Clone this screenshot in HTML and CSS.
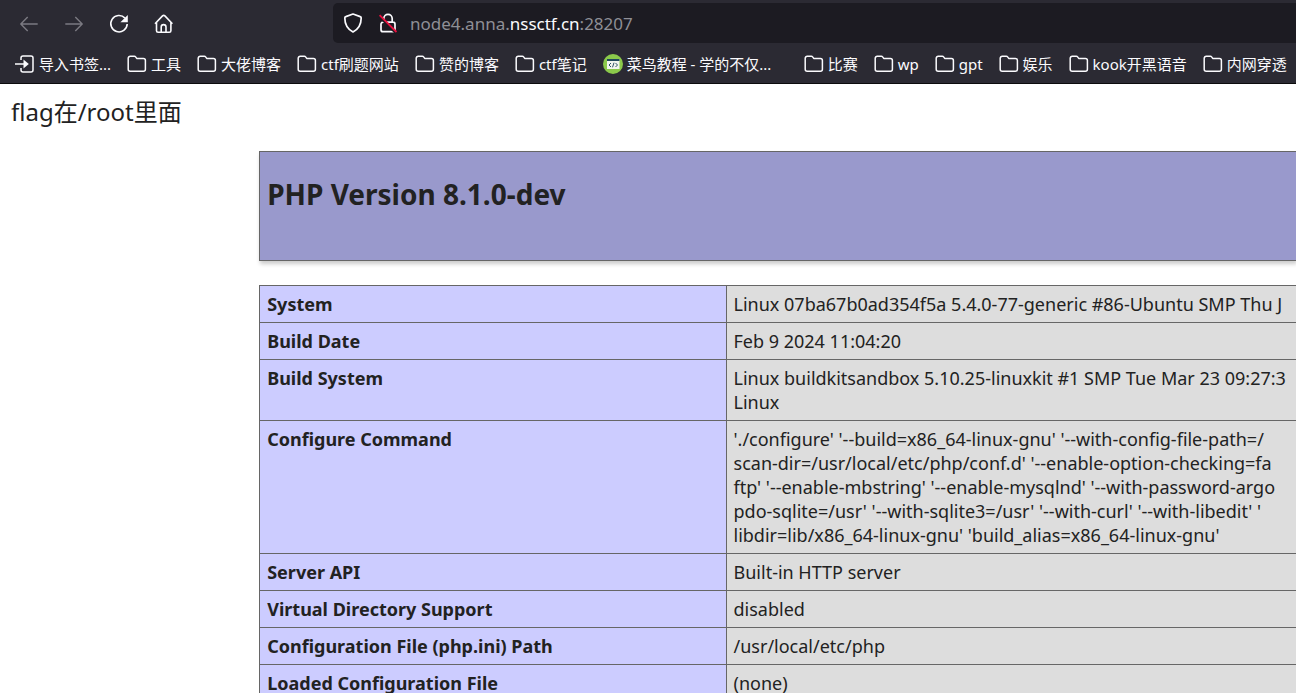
FILE: index.html
```html
<!DOCTYPE html>
<html lang="zh-CN">
<head>
<meta charset="utf-8">
<title>PHP 8.1.0-dev - phpinfo()</title>
<link rel="stylesheet" href="styles.css">
</head>
<body>
<svg class="defs" aria-hidden="true">
  <symbol id="folder" viewBox="0 0 20 20">
    <path d="M3.2 2.3h4.200c.5 0 .9.2 1.200.6l1.100 1.500h6.700a2 2 0 0 1 2 2v8.800a2 2 0 0 1-2 2H3.200a2 2 0 0 1-2-2V4.300a2 2 0 0 1 2-2z" fill="none" stroke="currentColor" stroke-width="1.5" stroke-linejoin="round"/>
  </symbol>
</svg>
<header class="chrome">
  <div class="toolbar">
    <nav class="controls" aria-label="导航">
      <button class="tool" type="button" aria-label="后退" disabled><svg viewBox="0 0 20 20"><path d="M18.7 10H1.8M8.7 3 1.8 10l6.9 7"/></svg></button>
      <button class="tool" type="button" aria-label="前进" disabled><svg viewBox="0 0 20 20"><path d="M1.3 10h16.9M11.3 3l6.9 7-6.9 7"/></svg></button>
      <button class="tool" type="button" aria-label="刷新"><svg class="bold" viewBox="0 0 20 20"><path d="M16 4.1A8.2 8.2 0 1 0 18.2 10"/><path class="solid" d="M18.8 1v7.2h-7.4z"/></svg></button>
      <button class="tool" type="button" aria-label="主页"><svg class="bold" viewBox="0 0 20 20"><path d="M1 9.8 8.500 1.900a1.700 1.700 0 0 1 2.400 0l7.500 7.900M2.500 8.500v8.200a1.600 1.600 0 0 0 1.600 1.600h11.200a1.600 1.600 0 0 0 1.600-1.600V8.500M7.200 18v-5a2.400 2.400 0 0 1 4.800 0v5"/></svg></button>
    </nav>
    <div class="address">
      <svg class="site" viewBox="0 0 20 20" aria-hidden="true"><path d="M10 1 17.200 3.600c.6.2 1 .7 1 1.300 0 6.500-2.600 11-8.200 14.100C4.400 15.900 1.800 11.400 1.800 4.900c0-.6.4-1.100 1-1.300z"/></svg>
      <svg class="site" viewBox="0 0 20 20" aria-hidden="true"><path d="M5.800 9V5.500a4.200 4.200 0 0 1 8.400 0V9M5 9.200h10a2 2 0 0 1 2 2v5.500a2 2 0 0 1-2 2H5a2 2 0 0 1-2-2v-5.500a2 2 0 0 1 2-2z"/><path class="gap" d="M1.200 3.700 17.500 20"/><path class="strike" d="M1.600 2.200 18.500 19"/></svg>
      <span class="url">node4.anna.<span class="domain">nssctf.cn</span>:28207</span>
    </div>
  </div>
  <nav class="bookmarks" aria-label="书签">
    <a class="mark" href="#"><svg viewBox="0 0 20 20"><path d="M6 6V4a2 2 0 0 1 2-2h8a2 2 0 0 1 2 2v12a2 2 0 0 1-2 2H8a2 2 0 0 1-2-2v-2M0 10h11" fill="none" stroke="currentColor" stroke-width="1.500"/><path d="M8.500 5.500 13.800 10l-5.300 4.500z" fill="currentColor"/></svg><span>导入书签...</span></a>
    <a class="mark" href="#"><svg><use href="#folder"/></svg><span>工具</span></a>
    <a class="mark" href="#"><svg><use href="#folder"/></svg><span>大佬博客</span></a>
    <a class="mark" href="#"><svg><use href="#folder"/></svg><span>ctf刷题网站</span></a>
    <a class="mark" href="#"><svg><use href="#folder"/></svg><span>赞的博客</span></a>
    <a class="mark" href="#"><svg><use href="#folder"/></svg><span>ctf笔记</span></a>
    <a class="mark wide" href="#"><svg viewBox="0 0 20 20"><circle cx="10" cy="10" r="10" fill="#8bc94b"/><path d="M4 5h12.500v10H4z" fill="#f1f4ef"/><path d="M4 5h12.500v2H4z" fill="#21485c"/><path d="M8 9 6 11l2 2M12.500 9l2 2-2 2M11 8.700l-1.500 4.600" fill="none" stroke="#31546a"/></svg><span>菜鸟教程 - 学的不仅...</span></a>
    <a class="mark" href="#"><svg><use href="#folder"/></svg><span>比赛</span></a>
    <a class="mark" href="#"><svg><use href="#folder"/></svg><span>wp</span></a>
    <a class="mark" href="#"><svg><use href="#folder"/></svg><span>gpt</span></a>
    <a class="mark" href="#"><svg><use href="#folder"/></svg><span>娱乐</span></a>
    <a class="mark" href="#"><svg><use href="#folder"/></svg><span>kook开黑语音</span></a>
    <a class="mark" href="#"><svg><use href="#folder"/></svg><span>内网穿透</span></a>
  </nav>
</header>
<main class="page">
  <p class="hint">flag在/root里面</p>
  <div class="info">
    <div class="banner"><h1>PHP Version 8.1.0-dev</h1></div>
    <table>
      <tbody>
        <tr><th scope="row">System</th><td>Linux 07ba67b0ad354f5a 5.4.0-77-generic #86-Ubuntu SMP Thu J</td></tr>
        <tr><th scope="row">Build Date</th><td>Feb 9 2024 11:04:20</td></tr>
        <tr><th scope="row">Build System</th><td>Linux buildkitsandbox 5.10.25-linuxkit #1 SMP Tue Mar 23 09:27:3<br>Linux</td></tr>
        <tr><th scope="row">Configure Command</th><td>'./configure' '--build=x86_64-linux-gnu' '--with-config-file-path=/<br>scan-dir=/usr/local/etc/php/conf.d' '--enable-option-checking=fa<br>ftp' '--enable-mbstring' '--enable-mysqlnd' '--with-password-argo<br>pdo-sqlite=/usr' '--with-sqlite3=/usr' '--with-curl' '--with-libedit' '<br>libdir=lib/x86_64-linux-gnu' 'build_alias=x86_64-linux-gnu'</td></tr>
        <tr><th scope="row">Server API</th><td>Built-in HTTP server</td></tr>
        <tr><th scope="row">Virtual Directory Support</th><td>disabled</td></tr>
        <tr><th scope="row">Configuration File (php.ini) Path</th><td>/usr/local/etc/php</td></tr>
        <tr><th scope="row">Loaded Configuration File</th><td>(none)</td></tr>
      </tbody>
    </table>
  </div>
</main>
</body>
</html>
```
FILE: styles.css
```css
* { box-sizing: border-box; }

body {
  display: flex;
  flex-direction: column;
  height: 100vh;
  margin: 0;
  overflow: hidden;
  background: #fff;
  color: #222;
  font-family: "Noto Sans", "Noto Sans CJK SC", sans-serif;
}

.defs { position: absolute; width: 0; height: 0; }

.chrome {
  flex: none;
  background: #2b2a33;
  border-bottom: 1px solid #0c0c0d;
  color: #fbfbfe;
}

.toolbar { display: flex; padding: 3px 0; }

.controls {
  display: flex;
  flex: none;
  align-items: center;
  gap: 25px;
  width: 333px;
  padding: 1px 0 0 19px;
}

.tool {
  width: 20px;
  height: 20px;
  padding: 0;
  border: 0;
  background: none;
  color: inherit;
}
.tool:disabled { color: #7b7a82; }
.tool svg, .site {
  display: block;
  width: 20px;
  height: 20px;
  fill: none;
  stroke: currentColor;
  stroke-width: 1.4;
  stroke-linejoin: round;
}
.tool .bold { stroke-width: 1.6; }
.tool .solid { fill: currentColor; stroke: none; }

.address {
  display: flex;
  flex: 1;
  align-items: center;
  gap: 15px;
  height: 40px;
  padding-left: 10px;
  border-radius: 5px 0 0 5px;
  background: #1c1b22;
}
.site { stroke-width: 1.7; }
.site .gap { stroke: #1c1b22; stroke-width: 2; }
.site .strike { stroke: #e8123f; stroke-width: 1.8; }
.url { margin-left: -3px; color: #8f8f96; font-size: 17px; }
.domain { color: #fbfbfe; }

.bookmarks {
  display: flex;
  gap: 16px;
  height: 37px;
  padding-left: 15px;
  white-space: nowrap;
}
.mark {
  display: flex;
  flex: none;
  align-items: center;
  gap: 4px;
  height: 36px;
  color: inherit;
  font-size: 15px;
  line-height: 20px;
  text-decoration: none;
}
.mark svg { flex: none; width: 20px; height: 20px; }
.wide { width: 185px; }

.page { flex: 1; min-height: 0; overflow: hidden; }

.hint {
  margin: 0;
  padding: 12px 11px 0;
  font-size: 24px;
  line-height: 32px;
}

.info { margin: 23px 0 0 20%; }

.banner {
  height: 110px;
  padding: 22px 7px;
  border: 1px solid #666;
  border-right: 0;
  background: #9999cc;
  box-shadow: 1px 3px 4px #ccc;
}
.banner h1 { margin: 0; font-size: 28px; line-height: 40px; }

table {
  width: 100%;
  margin-top: 24px;
  border-collapse: collapse;
  table-layout: fixed;
  font-size: 18px;
  line-height: 24px;
}
th, td {
  overflow: hidden;
  padding: 6px 7px;
  border: 1px solid #666;
  text-align: left;
  vertical-align: top;
  white-space: nowrap;
}
th { width: 45%; background: #ccccff; }
td { padding-right: 0; border-right: 0; background: #ddd; }
```
